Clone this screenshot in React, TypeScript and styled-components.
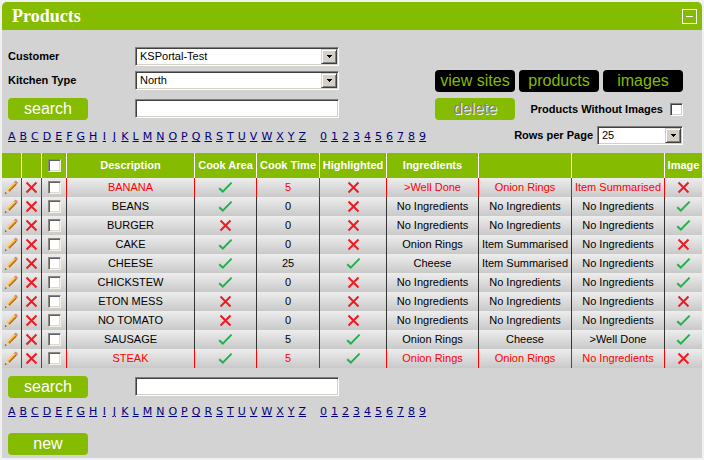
import React, { useState } from "react";
import styled, { createGlobalStyle, css } from "styled-components";

const GREEN = "#85bb00";
const SANS = '"Liberation Sans", Arial, sans-serif';

const GlobalStyle = createGlobalStyle`
  *, *::before, *::after { box-sizing: border-box; }
  body { margin: 0; background: #f0f0f0; font: 11px/13px ${SANS}; color: #000; }
`;

const Panel = styled.section`
  margin: 2px;
  border-radius: 5px 5px 0 0;
  overflow: hidden;
  background: #d3d3d3;
`;

const TitleBar = styled.header`
  display: flex;
  align-items: center;
  justify-content: space-between;
  height: 28px;
  padding: 0 5px 0 10px;
  background: ${GREEN};
  color: #fff;
`;

const Title = styled.h1`
  margin: 0;
  font: bold 18px/28px "Liberation Serif", "Times New Roman", serif;
`;

const CollapseButton = styled.button`
  display: grid;
  place-items: center;
  width: 15px;
  height: 15px;
  padding: 0;
  border: 1px solid #fff;
  background: transparent;
  cursor: pointer;

  &::before {
    content: "";
    width: 7px;
    height: 1px;
    background: #fff;
  }
`;

const FilterArea = styled.div`
  display: flex;
  justify-content: space-between;
  align-items: flex-start;
  padding: 17px 19px 8px 6px;
`;

const FilterColumn = styled.div`
  display: flex;
  flex-direction: column;
  gap: 5px;
`;

const FieldRow = styled.div`
  display: grid;
  grid-template-columns: 127px 204px;
  align-items: center;
`;

const SearchRow = styled(FieldRow)<{ $spaced?: boolean }>`
  align-items: start;
  margin-top: ${(p) => (p.$spaced ? "3px" : "0")};
`;

const FieldLabel = styled.label`
  font-weight: bold;
`;

const sunken = css`
  border: 1px solid;
  border-color: #808080 #fff #fff #808080;
  box-shadow: inset 1px 1px 0 #404040, inset -1px -1px 0 #d4d0c8;
  border-radius: 0;
  background: #fff;
`;

const SelectShell = styled.span<{ $width: number }>`
  position: relative;
  display: block;
  width: ${(p) => p.$width}px;
  height: 19px;
`;

const SelectBox = styled.select`
  ${sunken}
  appearance: none;
  display: block;
  width: 100%;
  height: 19px;
  margin: 0;
  padding: 0 18px 0 4px;
  font: 11px/15px ${SANS};
  color: #000;
`;

const SelectArrow = styled.span`
  position: absolute;
  top: 2px;
  right: 2px;
  display: grid;
  place-items: center;
  width: 16px;
  height: 15px;
  border: 1px solid;
  border-color: #d4d0c8 #404040 #404040 #d4d0c8;
  box-shadow: inset 1px 1px 0 #fff, inset -1px -1px 0 #808080;
  background: #d4d0c8;
  pointer-events: none;
`;

const TextInput = styled.input`
  ${sunken}
  width: 204px;
  height: 19px;
  margin: 1px 0 0;
  padding: 0 4px;
  font: 11px/15px ${SANS};
`;

type Tone = "green" | "black" | "disabled";

const ActionButton = styled.button<{ $tone?: Tone }>`
  display: block;
  width: 80px;
  height: 22px;
  padding: 0;
  border: 0;
  border-radius: 4px;
  background: ${(p) => (p.$tone === "black" ? "#000" : GREEN)};
  color: ${(p) =>
    p.$tone === "black" ? GREEN : p.$tone === "disabled" ? "#808080" : "#fff"};
  text-shadow: ${(p) => (p.$tone === "disabled" ? "1px 1px 0 #fff" : "none")};
  font: 16px/20px ${SANS};
  white-space: nowrap;
  cursor: pointer;
`;

const Letters = styled.nav<{ $low?: boolean }>`
  display: flex;
  gap: 4px;
  margin-top: ${(p) => (p.$low ? "6px" : "4px")};
  font: 11px/15px "DejaVu Sans", Verdana, sans-serif;
`;

const LetterLink = styled.a<{ $first?: boolean }>`
  min-width: 6px;
  margin-left: ${(p) => (p.$first ? "10px" : "0")};
  color: #000080;
  text-align: center;
  text-decoration: underline;
`;

const ToolColumn = styled.div`
  display: flex;
  flex-direction: column;
  gap: 6px;
  width: 248px;
  padding-top: 23px;
`;

const ToolRow = styled.div<{ $end?: boolean }>`
  display: flex;
  align-items: center;
  justify-content: ${(p) => (p.$end ? "flex-end" : "space-between")};
  gap: 4px;
`;

const CheckLabel = styled.label`
  display: flex;
  align-items: center;
  gap: 7px;
  font-weight: bold;
`;

const CheckBox = styled.input`
  ${sunken}
  appearance: none;
  display: inline-block;
  width: 13px;
  height: 13px;
  margin: 0;
  vertical-align: middle;

  &:checked {
    background: radial-gradient(circle, #000 0 3px, #fff 3px);
  }
`;

const RowCheckBox = styled(CheckBox)`
  border-color: #8c8880 #f4f0e6 #f4f0e6 #8c8880;
  box-shadow: inset 1px 1px 0 #5c6068, inset -1px -1px 0 #dedad0;
`;

const Grid = styled.table`
  width: 100%;
  table-layout: fixed;
  border-collapse: separate;
  border-spacing: 0;
  text-align: center;
`;

const Col = styled.col<{ $width?: number }>`
  width: ${(p) => (p.$width ? `${p.$width}px` : "auto")};
`;

const HeadCell = styled.th`
  height: 25px;
  padding: 0;
  border-right: 1px solid #fff;
  background: ${GREEN};
  color: #fff;
  white-space: nowrap;

  &:last-child { border-right: 0; }
`;

const BodyRow = styled.tr<{ $alert?: boolean }>`
  color: ${(p) => (p.$alert ? "#f00" : "#000")};
  --rule: ${(p) => (p.$alert ? "#f00" : "#333")};
`;

const Cell = styled.td`
  height: 19px;
  padding: 0;
  border-right: 1px solid var(--rule);
  background: linear-gradient(#ededed, #c9c9c9);
  white-space: nowrap;
  line-height: 13px;

  &:last-child { border-right: 0; }
`;

const IconButton = styled.button`
  display: block;
  margin: 0 auto;
  padding: 0;
  border: 0;
  background: none;
  cursor: pointer;
`;

const Icon = styled.svg`
  display: block;
  margin: 0 auto;
`;

const FooterArea = styled.footer`
  display: flex;
  flex-direction: column;
  align-items: flex-start;
  padding: 8px 6px 3px;
`;

const NewRow = styled.div`
  margin-top: 14px;
`;

const Cross = () => (
  <Icon width="13" height="13" viewBox="0 0 13 13" role="img" aria-label="No">
    <path d="M1.5 1.5 11.5 11.5M11.5 1.5 1.5 11.5" stroke="#ed1c24" strokeWidth="2" fill="none" />
  </Icon>
);

const Tick = () => (
  <Icon width="15" height="13" viewBox="0 0 15 13" role="img" aria-label="Yes">
    <path d="M1.2 7.2 4.8 10.6 13.6 1.6" stroke="#22b14c" strokeWidth="2" fill="none" />
  </Icon>
);

const Pencil = () => (
  <Icon width="15" height="15" viewBox="0 0 15 15" aria-hidden="true">
    <path d="M2.8 9.2 10 2 12.6 4.6 5.4 11.8Z" fill="#f2a52e" />
    <path d="M2.8 9.2 10 2 10.9 2.9 3.7 10.1Z" fill="#ffd88c" />
    <path d="M4.6 11 11.8 3.8 12.6 4.6 5.4 11.8Z" fill="#a5651a" />
    <path d="M10 2 11.2 0.8Q12 0.4 13 1.4T13.8 3.4L12.6 4.6Z" fill="#cf8d74" />
    <path d="M2.8 9.2 5.4 11.8 1.2 13.6Z" fill="#ecd2a8" />
    <path d="M0.8 14 1.6 12 2.9 13.2Z" fill="#444" />
  </Icon>
);

interface SelectFieldProps {
  id: string;
  width: number;
  options: string[];
}

const SelectField = ({ id, width, options }: SelectFieldProps) => (
  <SelectShell $width={width}>
    <SelectBox id={id}>
      {options.map((o) => (
        <option key={o}>{o}</option>
      ))}
    </SelectBox>
    <SelectArrow>
      <svg width="5" height="3" viewBox="0 0 5 3" shapeRendering="crispEdges" aria-hidden="true">
        <path d="M0 0h5v1H4v1H3v1H2V2H1V1H0Z" />
      </svg>
    </SelectArrow>
  </SelectShell>
);

const LetterIndex = ({ low }: { low?: boolean }) => (
  <Letters $low={low} aria-label="Filter by first character">
    {"ABCDEFGHIJKLMNOPQRSTUVWXYZ0123456789".split("").map((c) => (
      <LetterLink key={c} href={`#${c}`} $first={c === "0"}>
        {c}
      </LetterLink>
    ))}
  </Letters>
);

interface Product {
  name: string;
  area: boolean;
  time: number;
  highlighted: boolean;
  ingredients: [string, string, string];
  image: boolean;
  alert?: boolean;
}

const NONE = "No Ingredients";
const RINGS = "Onion Rings";
const ITEM = "Item Summarised";

const products: Product[] = [
  { name: "BANANA", area: true, time: 5, highlighted: false, ingredients: [">Well Done", RINGS, ITEM], image: false, alert: true },
  { name: "BEANS", area: true, time: 0, highlighted: false, ingredients: [NONE, NONE, NONE], image: true },
  { name: "BURGER", area: false, time: 0, highlighted: false, ingredients: [NONE, NONE, NONE], image: true },
  { name: "CAKE", area: true, time: 0, highlighted: false, ingredients: [RINGS, ITEM, NONE], image: false },
  { name: "CHEESE", area: true, time: 25, highlighted: true, ingredients: ["Cheese", ITEM, NONE], image: true },
  { name: "CHICKSTEW", area: true, time: 0, highlighted: false, ingredients: [NONE, NONE, NONE], image: true },
  { name: "ETON MESS", area: false, time: 0, highlighted: false, ingredients: [NONE, NONE, NONE], image: false },
  { name: "NO TOMATO", area: false, time: 0, highlighted: false, ingredients: [NONE, NONE, NONE], image: true },
  { name: "SAUSAGE", area: true, time: 5, highlighted: true, ingredients: [RINGS, "Cheese", ">Well Done"], image: true },
  { name: "STEAK", area: true, time: 5, highlighted: true, ingredients: [RINGS, RINGS, NONE], image: false, alert: true },
];

const columnWidths = [20, 20, 25, undefined, 62, 63, 67, 92, 93, 93, 37];
const headings = ["Description", "Cook Area", "Cook Time", "Highlighted", "Ingredients", "", "", "Image"];

const Mark = ({ on }: { on: boolean }) => (on ? <Tick /> : <Cross />);

export default function App() {
  const [open, setOpen] = useState(true);
  const [selected, setSelected] = useState<string[]>([]);
  const all = selected.length === products.length;

  const toggle = (name: string) =>
    setSelected((s) => (s.includes(name) ? s.filter((n) => n !== name) : [...s, name]));

  return (
    <>
      <GlobalStyle />
      <Panel>
        <TitleBar>
          <Title>Products</Title>
          <CollapseButton aria-label="Collapse" aria-expanded={open} onClick={() => setOpen(!open)} />
        </TitleBar>
        {open && (
          <>
            <FilterArea>
              <FilterColumn>
                <FieldRow>
                  <FieldLabel htmlFor="customer">Customer</FieldLabel>
                  <SelectField id="customer" width={204} options={["KSPortal-Test"]} />
                </FieldRow>
                <FieldRow>
                  <FieldLabel htmlFor="kitchen">Kitchen Type</FieldLabel>
                  <SelectField id="kitchen" width={204} options={["North"]} />
                </FieldRow>
                <SearchRow $spaced>
                  <ActionButton>search</ActionButton>
                  <TextInput type="text" aria-label="Search products" />
                </SearchRow>
                <LetterIndex />
              </FilterColumn>
              <ToolColumn>
                <ToolRow>
                  <ActionButton $tone="black">view sites</ActionButton>
                  <ActionButton $tone="black">products</ActionButton>
                  <ActionButton $tone="black">images</ActionButton>
                </ToolRow>
                <ToolRow>
                  <ActionButton $tone="disabled" disabled>delete</ActionButton>
                  <CheckLabel>
                    Products Without Images
                    <CheckBox type="checkbox" />
                  </CheckLabel>
                </ToolRow>
                <ToolRow $end>
                  <FieldLabel htmlFor="rows">Rows per Page</FieldLabel>
                  <SelectField id="rows" width={86} options={["25", "50", "100"]} />
                </ToolRow>
              </ToolColumn>
            </FilterArea>
            <Grid>
              <colgroup>
                {columnWidths.map((w, i) => (
                  <Col key={i} $width={w} />
                ))}
              </colgroup>
              <thead>
                <tr>
                  <HeadCell />
                  <HeadCell />
                  <HeadCell>
                    <RowCheckBox
                      type="checkbox"
                      aria-label="Select all"
                      checked={all}
                      onChange={() => setSelected(all ? [] : products.map((p) => p.name))}
                    />
                  </HeadCell>
                  {headings.map((h, i) => (
                    <HeadCell key={i}>{h}</HeadCell>
                  ))}
                </tr>
              </thead>
              <tbody>
                {products.map((p) => (
                  <BodyRow key={p.name} $alert={p.alert}>
                    <Cell>
                      <IconButton aria-label={`Edit ${p.name}`}><Pencil /></IconButton>
                    </Cell>
                    <Cell>
                      <IconButton aria-label={`Delete ${p.name}`}><Cross /></IconButton>
                    </Cell>
                    <Cell>
                      <RowCheckBox
                        type="checkbox"
                        aria-label={`Select ${p.name}`}
                        checked={selected.includes(p.name)}
                        onChange={() => toggle(p.name)}
                      />
                    </Cell>
                    <Cell>{p.name}</Cell>
                    <Cell><Mark on={p.area} /></Cell>
                    <Cell>{p.time}</Cell>
                    <Cell><Mark on={p.highlighted} /></Cell>
                    {p.ingredients.map((name, i) => (
                      <Cell key={i}>{name}</Cell>
                    ))}
                    <Cell><Mark on={p.image} /></Cell>
                  </BodyRow>
                ))}
              </tbody>
            </Grid>
            <FooterArea>
              <SearchRow>
                <ActionButton>search</ActionButton>
                <TextInput type="text" aria-label="Search products" />
              </SearchRow>
              <LetterIndex low />
              <NewRow>
                <ActionButton>new</ActionButton>
              </NewRow>
            </FooterArea>
          </>
        )}
      </Panel>
    </>
  );
}
